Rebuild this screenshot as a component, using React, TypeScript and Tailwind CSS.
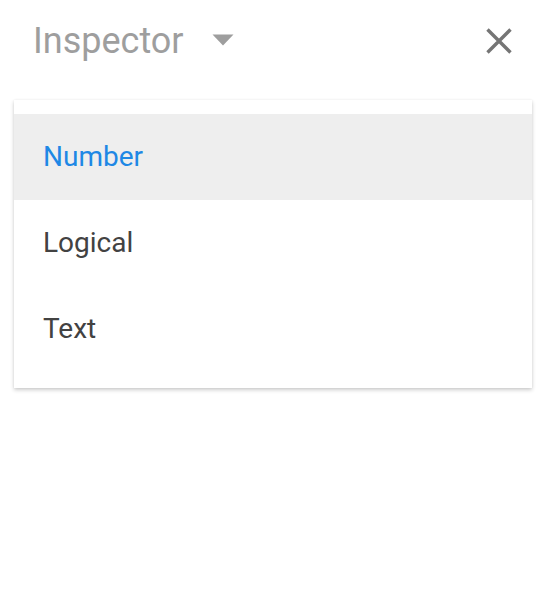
import React from "react";

export default function App() {
  const items = ["Number", "Logical", "Text"];
  return (
    <div
      className="w-[548px] h-[605px] bg-white"
      style={{ fontFamily: "Roboto, 'Liberation Sans', sans-serif" }}
    >
      <div className="h-[82px] flex items-center pl-[33px] pr-[36px]">
        <span className="text-[36px] leading-none text-[#9e9e9e]">Inspector</span>
        <svg className="ml-[28px] mt-[-2px]" width="22" height="12" viewBox="0 0 22 12">
          <path d="M0.5 0.5 L21.5 0.5 L11 11.5 Z" fill="#9e9e9e" />
        </svg>
        <div className="flex-1" />
        <svg width="26" height="26" viewBox="0 0 26 26">
          <path d="M1.5 1.5 L24.5 24.5 M24.5 1.5 L1.5 24.5" stroke="#757575" strokeWidth="3.4" />
        </svg>
      </div>
      <div className="mt-[18px] ml-[14px] mr-[16px] bg-white pt-[14px] pb-[16px] shadow-[0_2px_4px_rgba(0,0,0,0.2),0_0_2px_rgba(0,0,0,0.06)]">
        {items.map((it, i) => (
          <div
            key={it}
            className={
              i === 0
                ? "h-[86px] flex items-center pl-[29px] bg-[#eeeeee] text-[28px] text-[#1e88e5]"
                : "h-[86px] flex items-center pl-[29px] text-[28px] text-[#424242]"
            }
          >
            {it}
          </div>
        ))}
      </div>
    </div>
  );
}
